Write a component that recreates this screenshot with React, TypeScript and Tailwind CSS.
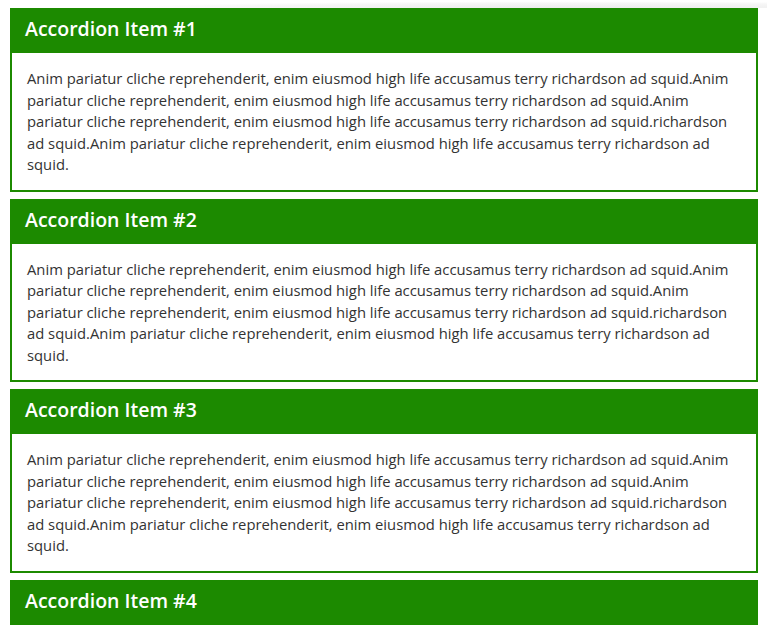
const body =
  'Anim pariatur cliche reprehenderit, enim eiusmod high life accusamus terry richardson ad squid.Anim pariatur cliche reprehenderit, enim eiusmod high life accusamus terry richardson ad squid.Anim pariatur cliche reprehenderit, enim eiusmod high life accusamus terry richardson ad squid.richardson ad squid.Anim pariatur cliche reprehenderit, enim eiusmod high life accusamus terry richardson ad squid.';

const items = [
  { id: 1, title: 'Accordion Item #1', open: true },
  { id: 2, title: 'Accordion Item #2', open: true },
  { id: 3, title: 'Accordion Item #3', open: true },
  { id: 4, title: 'Accordion Item #4', open: false },
];

export default function App() {
  return (
    <div className="min-h-screen bg-white font-['Open_Sans',sans-serif]">
      {/* faint curved shadow at top */}
      <div className="h-2 bg-[radial-gradient(ellipse_70%_100%_at_75%_100%,#ececec,#f6f6f6_60%,#ffffff_85%)]" />
      <div className="pl-[10px] pr-[9px]">
        {items.map((item) => (
          <div key={item.id} className="mb-[7px]">
            <div className="h-[45px] flex items-center px-[15px] pb-[3px] bg-[#1c8a00] text-white text-[19.5px] font-semibold">
              {item.title}
            </div>
            {item.open && (
              <div className="border-2 border-t-0 border-[#1c8a00] px-[15px] pt-[15px] pb-[14px] text-[14.8px] leading-[21.5px] text-[#333]">
                {body}
              </div>
            )}
          </div>
        ))}
      </div>
    </div>
  );
}
